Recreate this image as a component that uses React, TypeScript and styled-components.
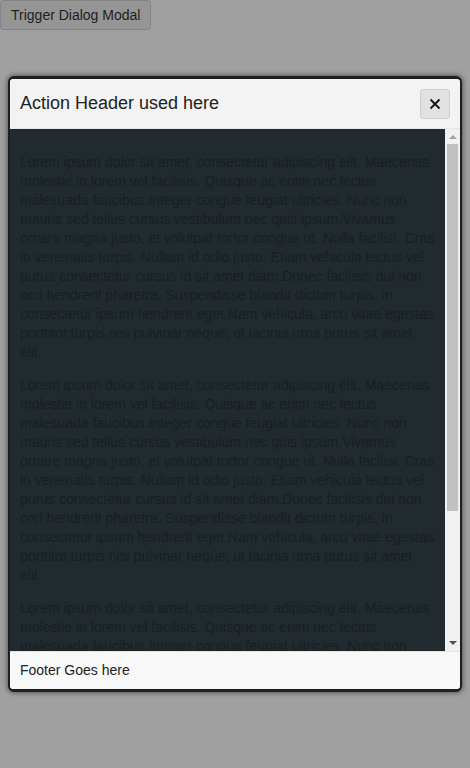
import React from "react";
import styled, { createGlobalStyle } from "styled-components";

const GlobalStyle = createGlobalStyle`
  html, body {
    margin: 0;
    padding: 0;
    background: #a0a0a0;
    font-family: "Liberation Sans", Arial, sans-serif;
  }
`;

const TriggerButton = styled.button`
  font-family: "Liberation Sans", Arial, sans-serif;
  font-size: 14px;
  color: #1e1e1e;
  background: #959595;
  border: 1px solid #848484;
  border-radius: 3px;
  padding: 6px 10px;
  height: 30px;
  margin: 0;
  display: block;
`;

const Overlay = styled.div`
  position: fixed;
  inset: 0;
  display: flex;
  align-items: center;
  justify-content: center;
  padding: 0 8px;
`;

const Dialog = styled.div`
  width: 100%;
  height: 616px;
  box-sizing: border-box;
  display: flex;
  flex-direction: column;
  border: 2px solid #1f1f1f;
  border-top-width: 3px;
  border-bottom-width: 3px;
  border-radius: 6px;
  overflow: hidden;
  box-shadow: 0 0 5px 1px rgba(0, 0, 0, 0.45);
  background: #f8f8f8;
`;

const Header = styled.div`
  height: 49px;
  flex: none;
  display: flex;
  align-items: center;
  justify-content: space-between;
  padding: 0 10px;
  background: #f3f3f3;
  border-bottom: 1px solid #e6e6e6;
`;

const Title = styled.h2`
  margin: 0;
  font-size: 18px;
  font-weight: normal;
  color: #222;
`;

const CloseButton = styled.button`
  width: 30px;
  height: 30px;
  padding: 0;
  display: flex;
  align-items: center;
  justify-content: center;
  background: #e1e1e1;
  border: 1px solid #cfcfcf;
  border-radius: 3px;
  color: #111;
`;

const BodyRow = styled.div`
  flex: 1;
  min-height: 0;
  display: flex;
`;

const Body = styled.div`
  flex: 1;
  min-width: 0;
  overflow-y: auto;
  scrollbar-width: none;
  background: #212a2e;
  padding: 10px;
`;

const Scrollbar = styled.div`
  width: 15px;
  flex: none;
  display: flex;
  flex-direction: column;
  background: #f1f1f1;
`;

const ScrollArrow = styled.div`
  height: 15px;
  flex: none;
  display: flex;
  align-items: center;
  justify-content: center;
`;

const Track = styled.div`
  flex: 1;
  padding: 0 2px;
`;

const Thumb = styled.div`
  background: #c1c1c1;
`;

const Paragraph = styled.p`
  margin: 14px 0;
  font-size: 14px;
  line-height: 19px;
  color: #181f22;
`;

const Footer = styled.div`
  flex: none;
  padding: 10px;
  font-size: 14px;
  line-height: 17px;
  color: #222;
  background: #f8f8f8;
  border-top: 1px solid #e4e4e4;
`;

const LOREM =
  "Lorem ipsum dolor sit amet, consectetur adipiscing elit. Maecenas molestie in lorem vel facilisis. Quisque ac enim nec lectus malesuada faucibus.Integer congue feugiat ultricies. Nunc non mauris sed tellus cursus vestibulum nec quis ipsum.Vivamus ornare magna justo, et volutpat tortor congue ut. Nulla facilisi. Cras in venenatis turpis. Nullam id odio justo. Etiam vehicula lectus vel purus consectetur cursus id sit amet diam.Donec facilisis dui non orci hendrerit pharetra. Suspendisse blandit dictum turpis, in consectetur ipsum hendrerit eget.Nam vehicula, arcu vitae egestas porttitor,turpis nisi pulvinar neque, ut lacinia urna purus sit amet elit.";

export default function App() {
  const thumbHeight = 367;
  return (
    <>
      <GlobalStyle />
      <TriggerButton>Trigger Dialog Modal</TriggerButton>
      <Overlay>
        <Dialog>
          <Header>
            <Title>Action Header used here</Title>
            <CloseButton aria-label="Close">
              <svg width="14" height="14" viewBox="0 0 14 14">
                <path d="M2.5 2.5 L11.5 11.5 M11.5 2.5 L2.5 11.5" stroke="#111" strokeWidth="1.8" fill="none" />
              </svg>
            </CloseButton>
          </Header>
          <BodyRow>
            <Body>
              <Paragraph>{LOREM}</Paragraph>
              <Paragraph>{LOREM}</Paragraph>
              <Paragraph>{LOREM}</Paragraph>
            </Body>
            <Scrollbar>
              <ScrollArrow>
                <svg width="8" height="5" viewBox="0 0 8 5">
                  <path d="M0 5 L4 1 L8 5 Z" fill="#a3a3a3" />
                </svg>
              </ScrollArrow>
              <Track>
                <Thumb style={{ height: thumbHeight }} />
              </Track>
              <ScrollArrow>
                <svg width="8" height="5" viewBox="0 0 8 5">
                  <path d="M0 0 L8 0 L4 4 Z" fill="#505050" />
                </svg>
              </ScrollArrow>
            </Scrollbar>
          </BodyRow>
          <Footer>Footer Goes here</Footer>
        </Dialog>
      </Overlay>
    </>
  );
}
